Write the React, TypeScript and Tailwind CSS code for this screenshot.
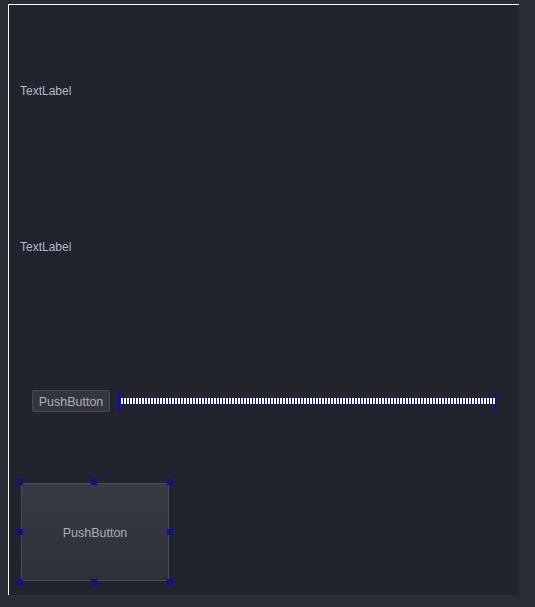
export default function App() {
  const handles = [
    "left-[-4px] top-[-4px]",
    "left-[70px] top-[-4px]",
    "right-[-4px] top-[-4px]",
    "left-[-4px] top-[46px]",
    "right-[-4px] top-[46px]",
    "left-[-4px] bottom-[-4px]",
    "left-[70px] bottom-[-4px]",
    "right-[-4px] bottom-[-4px]",
  ];

  return (
    <div
      className="w-[535px] h-[607px] bg-[#292c34] pt-[4px] pl-[8px]"
      style={{ fontFamily: '"Liberation Sans", Arial, sans-serif' }}
    >
      {/* Form canvas */}
      <div className="w-[511px] h-[591px] bg-[#21242c] border-t border-l border-white flex flex-col">
        <div className="mt-[78px] ml-[11px] h-4 leading-4 text-[12px] text-[#b3b9c3]">TextLabel</div>
        <div className="mt-[140px] ml-[11px] h-4 leading-4 text-[12px] text-[#b3b9c3]">TextLabel</div>

        {/* Button + horizontal spacer */}
        <div className="mt-[135px] ml-[23px] flex items-center">
          <button className="w-[78px] h-[22px] pt-[2px] bg-[#33363d] border border-[#474a51] rounded-[2px] text-[12.5px] text-[#a9b0bb] leading-none">
            PushButton
          </button>
          <div className="ml-[8px] w-[378px] h-[20px] flex items-center">
            <div className="w-[2px] h-[20px] bg-[#0000ff]" />
            <div className="flex-1 h-[6px] bg-[repeating-linear-gradient(90deg,#0000ff_0_1px,#ffffff_1px_3px)]" />
            <div className="w-[1px] h-[20px] bg-[#0000ff]" />
          </div>
        </div>

        {/* Selected push button */}
        <div className="mt-[71px] ml-[12px] relative w-[148px] h-[98px]">
          <button className="w-full h-full pt-[3px] bg-gradient-to-b from-[#383b42] to-[#2d3037] border border-[#4a4d54] rounded-[1px] text-[12.5px] text-[#a9b0bb]">
            PushButton
          </button>
          {handles.map((h) => (
            <div key={h} className={`absolute ${h} w-[6px] h-[6px] border border-[#0000ff] bg-[#1d2027]`} />
          ))}
        </div>
      </div>
    </div>
  );
}
